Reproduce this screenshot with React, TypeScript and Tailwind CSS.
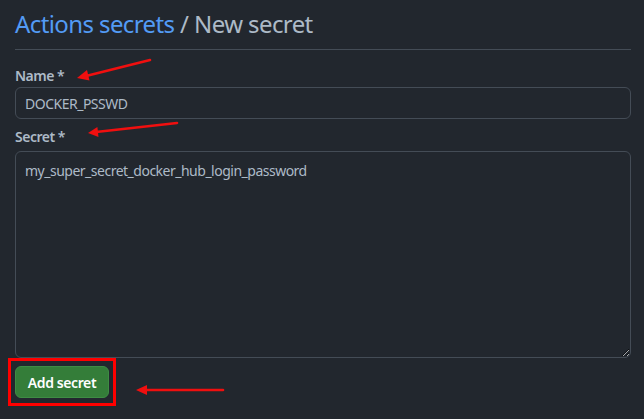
import React from "react";

export default function App() {
  return (
    <div
      className="relative min-h-screen w-full bg-[#22272e] pl-[15px] pr-[13px] text-[#adbac7]"
      style={{ fontFamily: '"Noto Sans", "Open Sans", sans-serif' }}
    >
      <div className="border-b border-[#444c56] pt-[6px] pb-[7px]">
        <h1 className="text-[24px] leading-[36px] font-normal tracking-[-0.6px]">
          <a className="text-[#539bf5]">Actions secrets</a>
          <span className="text-[#adbac7]"> / New secret</span>
        </h1>
      </div>

      <div className="mt-4">
        <label className="block text-[14px] leading-[20px] font-semibold mb-px tracking-[-0.5px]">Name *</label>
        <input
          readOnly
          value="DOCKER_PSSWD"
          className="block h-[32px] w-full rounded-md border border-[#444c56] bg-[#22272e] pl-[9px] text-[14px] tracking-[-0.5px] text-[#adbac7] outline-none"
        />
      </div>

      <div className="mt-2">
        <label className="block text-[14px] leading-[20px] font-semibold mb-1 tracking-[-0.5px]">Secret *</label>
        <textarea
          readOnly
          value="my_super_secret_docker_hub_login_password"
          className="block h-[207px] w-full rounded-md border border-[#444c56] bg-[#22272e] pl-[9px] pt-[9px] text-[14px] leading-[20px] tracking-[-0.5px] text-[#adbac7] outline-none"
        />
      </div>

      <div className="relative mt-[8px] inline-block">
        <button className="flex h-[32px] w-[94px] items-center justify-center rounded-md border border-[#3e8c44] bg-[#347d39] text-[14px] font-semibold tracking-[-0.4px] text-white">
          Add secret
        </button>
        <span className="pointer-events-none absolute -left-[7px] -right-[7px] -top-[8px] -bottom-[8px] border-[3px] border-[#ff0000]" />
      </div>

      <svg
        className="pointer-events-none absolute left-0 top-0"
        width="644"
        height="419"
        viewBox="0 0 644 419"
      >
        <g stroke="#f00f0f" strokeWidth="2.6" strokeLinecap="round" fill="#f00f0f">
          <line x1="150" y1="60" x2="86" y2="76" />
          <polygon points="77,78 89.5,80.5 87,70" stroke="none" />
          <line x1="177" y1="123" x2="96" y2="132" />
          <polygon points="88,133 98.5,137 97.4,127" stroke="none" />
          <line x1="223" y1="390" x2="144" y2="390" />
          <polygon points="136,390 147,385 147,395" stroke="none" />
        </g>
      </svg>
    </div>
  );
}
